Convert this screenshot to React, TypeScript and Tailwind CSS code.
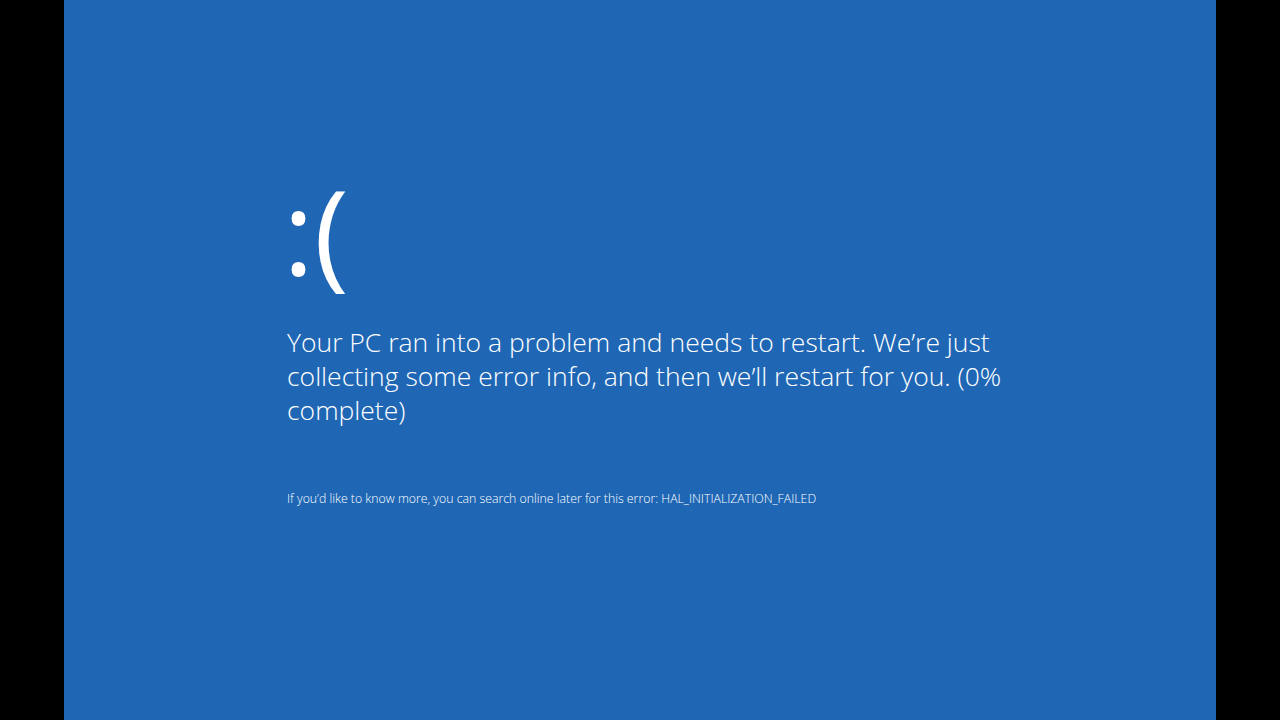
export default function App() {
  return (
    <div className="flex h-[720px] w-[1280px] bg-black">
      <div className="mx-16 flex h-full w-[1152px] flex-col bg-[#1f67b5] pl-[223px] pt-[155px] text-white font-['Open_Sans','Noto_Sans',sans-serif] font-light">
        <div className="h-[150px] text-[118px] leading-[150px] -ml-[4px] font-normal">:(</div>
        <p className="mt-[20px] w-[760px] text-[26.5px] leading-[34px]">
          Your PC ran into a problem and needs to restart. We’re just collecting some error info, and then we’ll restart for you. (0% complete)
        </p>
        <p className="mt-[64px] text-[12.3px] leading-[16px]">
          If you’d like to know more, you can search online later for this error: HAL_INITIALIZATION_FAILED
        </p>
      </div>
    </div>
  );
}
